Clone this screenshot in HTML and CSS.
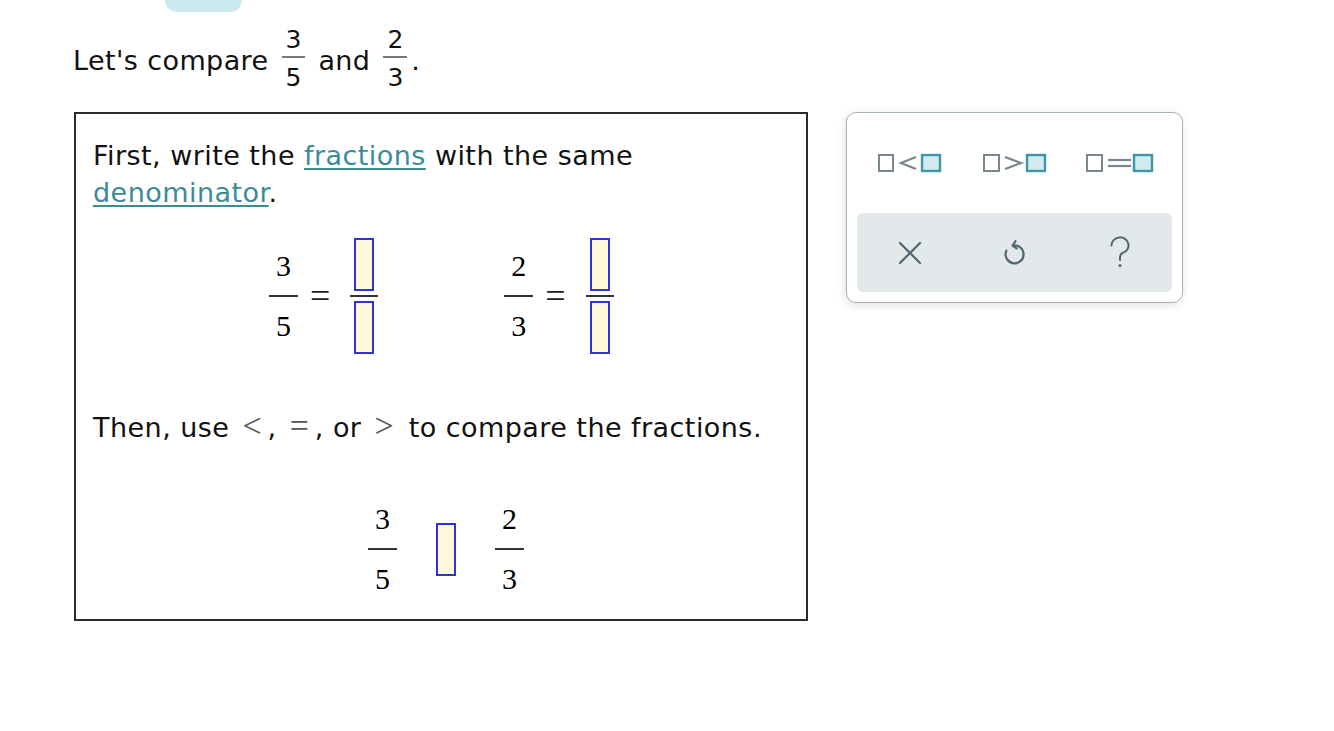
FILE: index.html
```html
<!DOCTYPE html>
<html lang="en">
<head>
<meta charset="utf-8">
<title>Compare fractions</title>
<link rel="stylesheet" href="styles.css">
</head>
<body>
<div class="tab-stub"></div>
<div class="page">
  <div class="prompt">Let's compare <span class="sfrac"><span class="n">3</span><span class="bar"></span><span class="d">5</span></span> and <span class="sfrac"><span class="n">2</span><span class="bar"></span><span class="d">3</span></span>.</div>
  <div class="work">
    <div class="card">
      <p class="para">First, write the <a class="term" href="#">fractions</a> with the same <a class="term" href="#">denominator</a>.</p>
      <div class="eq-row">
        <div class="eq-group">
          <span class="mfrac"><span class="n">3</span><span class="bar"></span><span class="d">5</span></span>
          <span class="eq">=</span>
          <span class="ifrac"><span class="blank"></span><span class="bar"></span><span class="blank"></span></span>
        </div>
        <div class="eq-group">
          <span class="mfrac"><span class="n">2</span><span class="bar"></span><span class="d">3</span></span>
          <span class="eq">=</span>
          <span class="ifrac"><span class="blank"></span><span class="bar"></span><span class="blank"></span></span>
        </div>
      </div>
      <p class="para para-2">Then, use <span class="op">&lt;</span>, <span class="op">=</span>, or <span class="op">&gt;</span> to compare the fractions.</p>
      <div class="cmp-row">
        <span class="mfrac"><span class="n">3</span><span class="bar"></span><span class="d">5</span></span>
        <span class="blank"></span>
        <span class="mfrac"><span class="n">2</span><span class="bar"></span><span class="d">3</span></span>
      </div>
    </div>
    <div class="palette">
      <div class="sym-row">
        <button class="sym" aria-label="less than">
          <svg width="64" height="20" viewBox="0 0 64 20"><rect x="1" y="2" width="14" height="16" fill="#fff" stroke="#78878d" stroke-width="2"/><polyline points="38,4 23,10 38,16" fill="none" stroke="#78878d" stroke-width="2.2"/><rect x="44" y="2" width="18" height="16" fill="#d2e9f0" stroke="#3c97a9" stroke-width="2.4"/></svg>
        </button>
        <button class="sym" aria-label="greater than">
          <svg width="64" height="20" viewBox="0 0 64 20"><rect x="1" y="2" width="15" height="16" fill="#fff" stroke="#78878d" stroke-width="2"/><polyline points="22,4 38,10 22,16" fill="none" stroke="#78878d" stroke-width="2.2"/><rect x="44" y="2" width="18" height="16" fill="#d2e9f0" stroke="#3c97a9" stroke-width="2.4"/></svg>
        </button>
        <button class="sym" aria-label="equal">
          <svg width="68" height="20" viewBox="0 0 68 20"><rect x="1" y="2" width="15" height="16" fill="#fff" stroke="#78878d" stroke-width="2"/><line x1="22" y1="7" x2="45" y2="7" stroke="#78878d" stroke-width="2.2"/><line x1="22" y1="13" x2="45" y2="13" stroke="#78878d" stroke-width="2.2"/><rect x="48" y="2" width="18" height="16" fill="#d2e9f0" stroke="#3c97a9" stroke-width="2.4"/></svg>
        </button>
      </div>
      <div class="tool-row">
        <button class="tool" aria-label="clear">
          <svg width="26" height="26" viewBox="0 0 26 26"><path d="M3 3 L23 23 M23 3 L3 23" fill="none" stroke="#4f6770" stroke-width="2.2" stroke-linecap="round"/></svg>
        </button>
        <button class="tool" aria-label="undo">
          <svg width="28" height="28" viewBox="0 0 28 28"><path d="M12 6.5 A9 9 0 1 1 5.4 11.6" fill="none" stroke="#4f6770" stroke-width="2.2" stroke-linecap="round"/><path d="M14.5 2.2 L11.6 6.5 L15.6 9.4" fill="none" stroke="#4f6770" stroke-width="2.2" stroke-linecap="round" stroke-linejoin="round"/></svg>
        </button>
        <button class="tool" aria-label="help">
          <svg width="26" height="34" viewBox="0 0 26 34"><path d="M4.5 9.5 A8.5 8 0 1 1 15.5 17 C13.5 18 13 19.5 13 22 V24" fill="none" stroke="#4f6770" stroke-width="2" stroke-linecap="round"/><circle cx="13" cy="29.5" r="1.5" fill="#4f6770"/></svg>
        </button>
      </div>
    </div>
  </div>
</div>
</body>
</html>
```

FILE: styles.css
```css
html, body {
  margin: 0;
  padding: 0;
  background: #fff;
}

body {
  font-family: "DejaVu Sans", Verdana, sans-serif;
  color: #111;
}

.tab-stub {
  margin-left: 165px;
  width: 77px;
  height: 12px;
  background: #cde9f1;
  border-radius: 0 0 12px 12px;
}

.page {
  padding-left: 73px;
}

.prompt {
  height: 100px;
  box-sizing: border-box;
  padding-top: 13px;
  font-size: 27px;
  letter-spacing: 0.4px;
  line-height: normal;
}

.sfrac {
  display: inline-flex;
  flex-direction: column;
  align-items: center;
  vertical-align: 22px;
  font-size: 25px;
  letter-spacing: 0;
  margin: 0 2px;
}
.sfrac .n, .sfrac .d {
  line-height: 29px;
  padding: 0 6px;
}
.sfrac .bar {
  align-self: stretch;
  height: 1.5px;
  background: #777;
  margin: 2px 2px 5px;
}

.work {
  display: flex;
  align-items: flex-start;
}

.card {
  width: 734px;
  height: 509px;
  box-sizing: border-box;
  margin-left: 1px;
  border: 2px solid #2b2b2b;
  padding: 23px 17px 0;
}

.para {
  margin: 0;
  font-size: 27px;
  letter-spacing: 0.45px;
  line-height: 37px;
}
.para-2 {
  margin-top: 55px;
}

.term {
  color: #3a8c97;
  text-decoration: underline;
  text-decoration-thickness: 1.5px;
  text-underline-offset: 3px;
}

.op {
  font-family: "Liberation Serif", serif;
  font-size: 34px;
  line-height: 30px;
  letter-spacing: 0;
  color: #555;
  padding: 0 6px 0 4px;
}

.mfrac {
  display: inline-flex;
  flex-direction: column;
  align-items: center;
  font-family: "Liberation Serif", "Times New Roman", serif;
  font-size: 30px;
  color: #000;
}
.mfrac .n, .mfrac .d {
  line-height: 30px;
  height: 30px;
  padding: 0 7px;
}
.mfrac .bar {
  align-self: stretch;
  height: 2px;
  background: #333;
  margin: 14px 0;
}

.eq-row {
  margin-top: 27px;
  padding-left: 176px;
  display: flex;
  gap: 126px;
}

.eq-group {
  display: flex;
  align-items: center;
}

.eq {
  font-family: "Liberation Serif", serif;
  font-size: 36px;
  line-height: 30px;
  margin: 0 20px 0 12px;
  color: #222;
}

.ifrac {
  display: inline-flex;
  flex-direction: column;
  align-items: center;
  width: 28px;
}
.ifrac .bar {
  align-self: stretch;
  height: 2px;
  background: #333;
  margin: 4px 0;
}

.blank {
  display: block;
  width: 20px;
  height: 53px;
  box-sizing: border-box;
  border: 2px solid #3131d9;
  background: #fdf8d9;
}

.cmp-row {
  margin-top: 58px;
  padding-left: 275px;
  display: flex;
  align-items: center;
  gap: 39px;
}

.palette {
  margin-left: 38px;
  width: 337px;
  height: 191px;
  box-sizing: border-box;
  border: 1.5px solid #a6b4bb;
  border-radius: 10px;
  background: #fff;
  box-shadow: -1px 2px 8px rgba(0, 0, 0, 0.13);
  padding: 0 10px 10px;
  display: flex;
  flex-direction: column;
}

.sym-row {
  height: 100px;
  display: grid;
  grid-template-columns: repeat(3, 1fr);
  align-items: center;
}

.sym, .tool {
  border: 0;
  background: transparent;
  padding: 0;
  display: flex;
  justify-content: center;
  align-items: center;
  cursor: pointer;
}

.tool-row {
  flex: 1;
  background: #e3e8eb;
  border-radius: 6px;
  display: grid;
  grid-template-columns: repeat(3, 1fr);
  align-items: center;
}
```
